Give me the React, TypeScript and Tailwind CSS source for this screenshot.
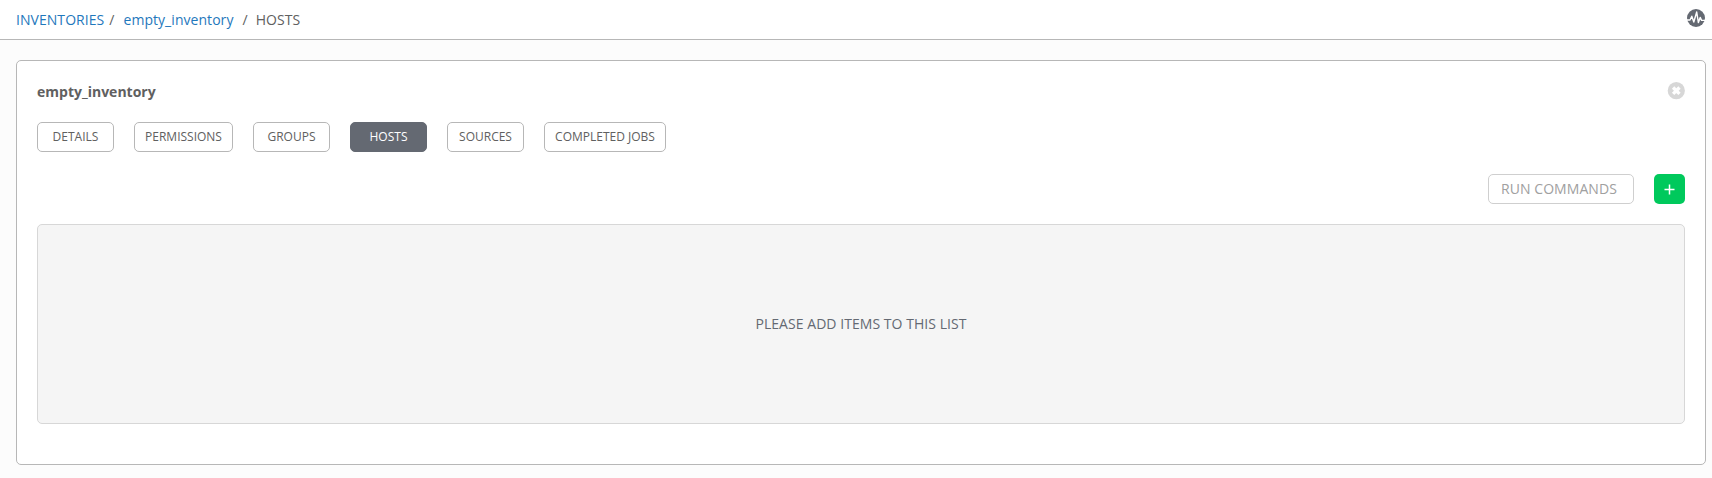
const tabs = [
  { label: 'DETAILS', width: 'w-[77px]' },
  { label: 'PERMISSIONS', width: 'w-[99px]' },
  { label: 'GROUPS', width: 'w-[77px]' },
  { label: 'HOSTS', width: 'w-[77px]', active: true },
  { label: 'SOURCES', width: 'w-[77px]' },
  { label: 'COMPLETED JOBS', width: 'w-[122px]' },
];

function ActivityIcon() {
  return (
    <svg width="18" height="18" viewBox="0 0 18 18" fill="none">
      <circle cx="9" cy="9" r="9" fill="#646972" />
      <path
        d="M0 11H3L4.8 7.2L6.8 13L9.7 3L11.4 13.6L13.2 8.4L14.6 11.4H18"
        stroke="#fff"
        strokeWidth="1.4"
        strokeLinejoin="round"
      />
    </svg>
  );
}

function CloseIcon() {
  return (
    <svg width="18" height="18" viewBox="0 0 18 18" fill="none">
      <circle cx="9.3" cy="8.7" r="8.6" fill="#d7d7d7" />
      <path d="M6.1 5.5L12.5 11.9M12.5 5.5L6.1 11.9" stroke="#fff" strokeWidth="3.3" />
    </svg>
  );
}

export default function App() {
  return (
    <div className="min-h-[478px] bg-[#fcfcfc] font-['Open_Sans',sans-serif] text-sm text-[#606060]">
      <header className="flex h-10 items-center justify-between border-b border-[#b7b7b7] bg-white pr-[7px] pl-4">
        <nav className="flex items-center leading-5 tracking-[0.05px]">
          <a className="text-[#1f78bc]">INVENTORIES</a>
          <span className="ml-[5px]">/</span>
          <a className="ml-[9px] text-[#1f78bc]">empty_inventory</a>
          <span className="ml-[9px]">/</span>
          <span className="ml-[8px]">HOSTS</span>
        </nav>
        <div className="pb-[3px]">
          <ActivityIcon />
        </div>
      </header>

      <main className="mt-5 mr-[6px] ml-4 h-[405px] rounded-[5px] border border-[#b7b7b7] bg-white px-5 pt-5">
        <div className="flex h-[21px] items-center justify-between">
          <h1 className="pt-px font-bold">empty_inventory</h1>
          <button aria-label="Close" className="pb-px">
            <CloseIcon />
          </button>
        </div>

        <div className="mt-5 flex gap-5">
          {tabs.map((tab) => (
            <button
              key={tab.label}
              className={`h-[30px] shrink-0 rounded-[5px] border text-xs whitespace-nowrap ${tab.width} ${
                tab.active ? 'border-[#646972] bg-[#646972] text-white' : 'border-[#b7b7b7] bg-white'
              }`}
            >
              {tab.label}
            </button>
          ))}
        </div>

        <div className="mt-[22px] flex justify-end gap-5">
          <button className="h-[30px] w-[146px] rounded-[5px] border border-[#cfcfcf] bg-white pl-3 text-left leading-5 tracking-[0.06px] text-[#a0a0a0]">
            RUN COMMANDS
          </button>
          <button aria-label="Add" className="flex h-[30px] w-[31px] items-center justify-center rounded-[5px] bg-[#00c95c] text-white">
            <svg width="11" height="11" viewBox="0 0 11 11">
              <path d="M5.5 0.5V10.5M0.5 5.5H10.5" stroke="currentColor" strokeWidth="1.5" />
            </svg>
          </button>
        </div>

        <div className="mt-5 flex h-[200px] items-center justify-center rounded-[5px] border border-[#d7d7d7] bg-[#f5f5f5] tracking-[0.05px] text-[#646972]">
          PLEASE ADD ITEMS TO THIS LIST
        </div>
      </main>
    </div>
  );
}
